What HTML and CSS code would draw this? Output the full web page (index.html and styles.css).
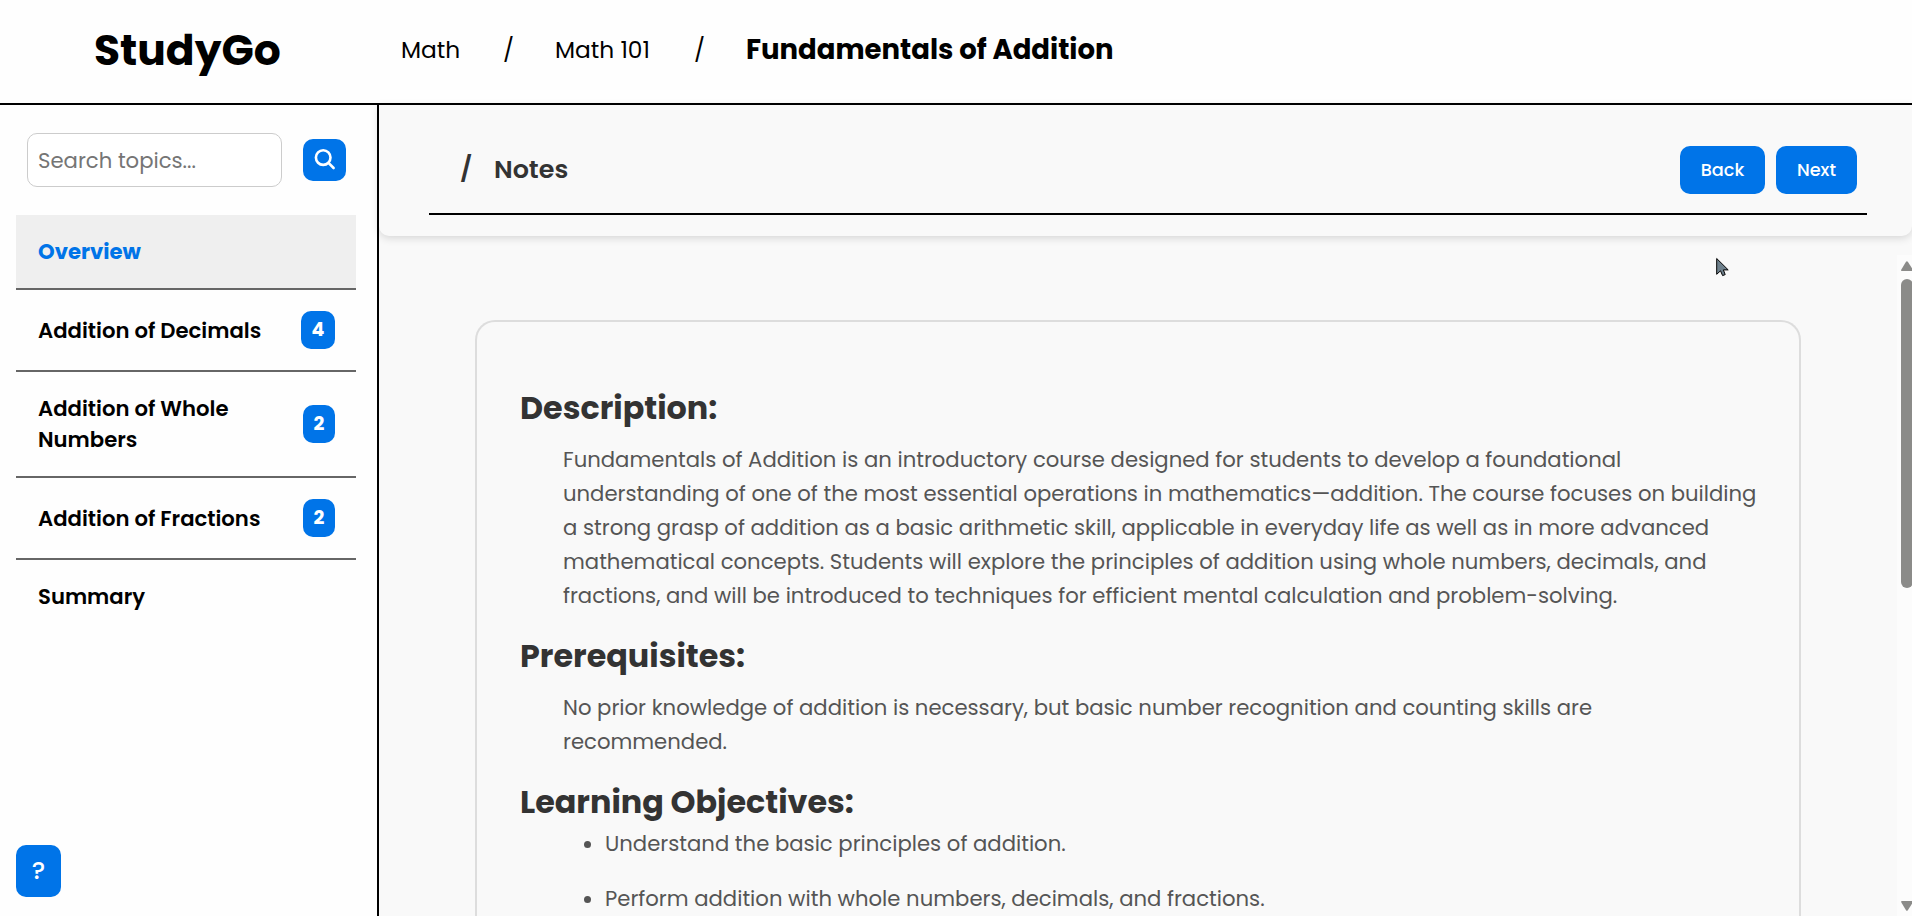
FILE: index.html
```html
<!DOCTYPE html>
<html lang="en">
<head>
<meta charset="utf-8">
<title>StudyGo</title>
<link rel="stylesheet" href="styles.css">
</head>
<body>
<header class="topbar">
  <div class="logo">StudyGo</div>
  <nav class="crumbs">
    <a class="crumb-math">Math</a>
    <span class="sep">/</span>
    <a class="crumb-course">Math 101</a>
    <span class="sep">/</span>
    <a class="crumb-current">Fundamentals of Addition</a>
  </nav>
</header>
<div class="layout">
  <aside class="sidebar">
    <div class="search">
      <div class="search-input">Search topics...</div>
      <button class="search-btn"><svg width="22" height="22" viewBox="0 0 22 22" fill="none" stroke="#fff" stroke-width="2.6" stroke-linecap="round"><circle cx="9.2" cy="8.6" r="7.3"/><path d="M14.5 13.9L19.6 19"/></svg></button>
    </div>
    <ul class="topics">
      <li class="topic active">Overview</li>
      <li class="topic"><span>Addition of Decimals</span><b class="badge wide">4</b></li>
      <li class="topic"><span>Addition of Whole<br>Numbers</span><b class="badge">2</b></li>
      <li class="topic"><span>Addition of Fractions</span><b class="badge">2</b></li>
      <li class="topic">Summary</li>
    </ul>
    <button class="help">?</button>
  </aside>
  <main class="main">
    <div class="panel">
      <div class="panel-inner">
        <div class="panel-title"><span class="slash">/</span><span>Notes</span></div>
        <div class="panel-actions"><button class="btn back">Back</button><button class="btn next">Next</button></div>
      </div>
    </div>
    <div class="scroll">
      <article class="card">
        <h2>Description:</h2>
        <p>Fundamentals of Addition is an introductory course designed for students to develop a foundational<br>
        understanding of one of the most essential operations in mathematics—addition. The course focuses on building<br>
        a strong grasp of addition as a basic arithmetic skill, applicable in everyday life as well as in more advanced<br>
        mathematical concepts. Students will explore the principles of addition using whole numbers, decimals, and<br>
        fractions, and will be introduced to techniques for efficient mental calculation and problem-solving.</p>
        <h2>Prerequisites:</h2>
        <p>No prior knowledge of addition is necessary, but basic number recognition and counting skills are<br>
        recommended.</p>
        <h2 class="tight">Learning Objectives:</h2>
        <ul class="goals">
          <li>Understand the basic principles of addition.</li>
          <li>Perform addition with whole numbers, decimals, and fractions.</li>
        </ul>
      </article>
      <div class="scrollbar">
        <svg class="arrow" width="15" height="10" viewBox="0 0 15 10"><path d="M1 10Q-.5 10 .5 8.3L5 .8Q5.9-.4 6.8.8L11.6 8.3Q12.5 10 11.2 10Z" fill="#8b8b89"/></svg>
        <div class="thumb"></div>
        <svg class="arrow down" width="15" height="10" viewBox="0 0 15 10"><path d="M1 0Q-.5 0 .5 1.7L5 9.2Q5.9 10.4 6.8 9.2L11.6 1.7Q12.5 0 11.2 0Z" fill="#8b8b89"/></svg>
      </div>
    </div>
  </main>
</div>
<svg class="cursor" width="14" height="20" viewBox="0 0 14 20"><path d="M.7 1.5V17.3L4.5 13.8L6.6 18.6L9.2 17.6L7.4 12.9H12.2Z" fill="#6e808c" stroke="#000" stroke-width="1"/></svg>
</body>
</html>
```

FILE: styles.css
```css
* { box-sizing: border-box; }
body {
  margin: 0;
  height: 916px;
  overflow: hidden;
  display: flex;
  flex-direction: column;
  background: #fefefe;
  color: #000;
  font-family: Poppins, Inter, "Liberation Sans", sans-serif;
}
button { font: inherit; border: 0; padding: 0; color: #fff; background: #0074e8; border-radius: 10px; }
ul { list-style: none; margin: 0; padding: 0; }
.topbar { flex: none; height: 105px; border-bottom: 2px solid #000; padding-bottom: 3px; display: flex; align-items: center; white-space: nowrap; }
.logo { width: 401px; padding-left: 94px; font-size: 42.4px; font-weight: 700; }
.crumbs { display: flex; align-items: center; font-size: 23.3px; }
.crumb-math { width: 102px; }
.crumb-course { width: 139px; }
.sep { width: 52px; }
.crumb-current { font-size: 27.5px; font-weight: 700; }
.layout { flex: 1; min-height: 0; display: flex; }
.sidebar { width: 379px; border-right: 2px solid #000; padding: 28px 21px 19px 16px; display: flex; flex-direction: column; }
.search { display: flex; align-items: center; padding: 0 10px 0 11px; justify-content: space-between; margin-bottom: 28px; }
.search-input { width: 255px; height: 54px; border: 1px solid #ccc; border-radius: 10px; background: #fff; padding-left: 10px; line-height: 53px; font-size: 21.2px; color: #757575; }
.search-btn { width: 43px; height: 42px; display: flex; align-items: center; justify-content: center; }
.topic { display: flex; align-items: center; justify-content: space-between; padding: 21px 21px 21px 22px; border-bottom: 2px solid #666; line-height: 31px; font-size: 21.2px; font-weight: 600; white-space: nowrap; }
.topic:last-child { border: 0; }
.active { background: #efefef; color: #0074e8; font-weight: 700; }
.badge { width: 32px; height: 38px; border-radius: 10px; background: #0074e8; color: #fff; text-align: center; line-height: 38px; font-size: 19px; font-weight: 700; }
.badge.wide { width: 34px; }
.help { width: 45px; height: 52px; margin-top: auto; padding-bottom: 1px; font-size: 25px; font-weight: 500; }
.main { flex: 1; min-width: 0; background: #f9f9f9; display: flex; flex-direction: column; }
.panel { flex: none; height: 131px; padding: 0 45px 0 50px; border-radius: 0 0 10px 10px; box-shadow: 0 2px 8px rgba(0,0,0,.15); }
.panel-inner { height: 110px; border-bottom: 2px solid #000; padding: 41px 10px 19px 31px; display: flex; align-items: center; justify-content: space-between; }
.panel-title { display: flex; align-items: center; padding-bottom: 1px; font-size: 25.4px; font-weight: 600; color: #333; }
.slash { width: 34px; }
.panel-actions { display: flex; gap: 11px; }
.btn { height: 48px; padding-bottom: 2px; font-size: 17.7px; font-weight: 500; }
.back { width: 85px; }
.next { width: 81px; }
.scroll { flex: 1; min-height: 0; overflow: hidden; display: flex; justify-content: space-between; margin-top: 19px; }
.card { width: 1326px; margin: 65px 0 0 96px; height: 640px; padding: 62px 30px 0 43px; border: 2px solid #ddd; border-bottom: 0; border-radius: 20px 20px 0 0; color: #555; font-size: 21.2px; line-height: 34px; white-space: nowrap; }
.card h2 { margin: 0 0 11px; font-size: 31.8px; line-height: 48px; color: #333; font-weight: 700; }
.card p { margin: 0 0 19px; padding-left: 43px; }
.card h2.tight { margin-bottom: 1px; }
.goals { padding-left: 85px; list-style: disc; }
.goals li { margin-bottom: 21px; }
.scrollbar { width: 15px; height: 661px; background: #fcfcfc; padding: 6px 0 5px 4px; display: flex; flex-direction: column; overflow: hidden; }
.arrow { flex: none; }
.thumb { width: 12px; height: 309px; margin-top: 8px; border-radius: 6px; background: #8b8b89; }
.down { margin-top: auto; }
.cursor { position: absolute; left: 1716px; top: 257px; }
```
